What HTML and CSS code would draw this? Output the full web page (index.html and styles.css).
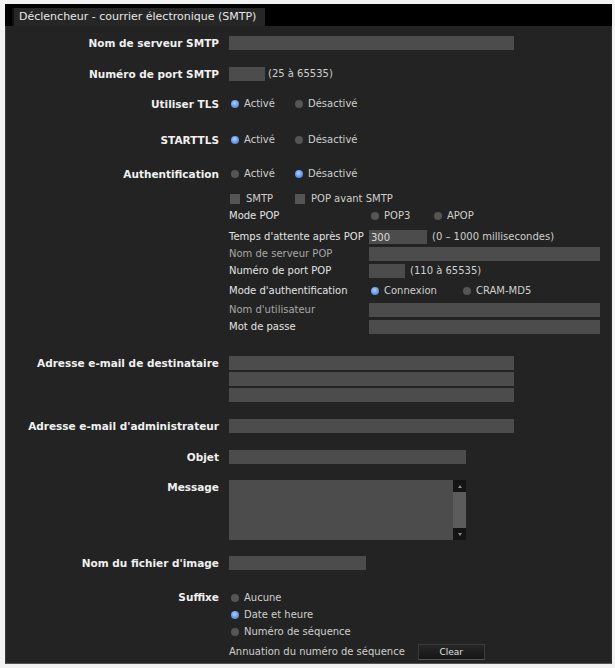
FILE: index.html
```html
<!DOCTYPE html>
<html lang="fr">
<head>
<meta charset="utf-8">
<title>Déclencheur - courrier électronique (SMTP)</title>
<link rel="stylesheet" href="styles.css">
</head>
<body>
<div class="page">
  <div class="tabbar"><div class="tab">Déclencheur - courrier électronique (SMTP)</div></div>
  <div class="panel">
    <div class="row g-first">
      <div class="lbl">Nom de serveur SMTP</div>
      <div class="fld"><input class="box w285" type="text"></div>
    </div>
    <div class="row g17">
      <div class="lbl">Numéro de port SMTP</div>
      <div class="fld"><input class="box w36" type="text"><span class="hint">(25 à 65535)</span></div>
    </div>
    <div class="row g16">
      <div class="lbl">Utiliser TLS</div>
      <div class="fld">
        <span class="opt o64"><span class="radio on"></span>Activé</span>
        <span class="opt"><span class="radio"></span>Désactivé</span>
      </div>
    </div>
    <div class="row g22">
      <div class="lbl">STARTTLS</div>
      <div class="fld">
        <span class="opt o64"><span class="radio on"></span>Activé</span>
        <span class="opt"><span class="radio"></span>Désactivé</span>
      </div>
    </div>
    <div class="row g20">
      <div class="lbl">Authentification</div>
      <div class="fld">
        <span class="opt o64"><span class="radio"></span>Activé</span>
        <span class="opt"><span class="radio on"></span>Désactivé</span>
      </div>
    </div>
    <div class="row g11">
      <div class="lbl"></div>
      <div class="fld">
        <span class="opt o66"><span class="check"></span>SMTP</span>
        <span class="opt"><span class="check"></span>POP avant SMTP</span>
      </div>
    </div>
    <div class="row g3">
      <div class="lbl"></div>
      <div class="sub">
        <div class="slbl">Mode POP</div>
        <div class="sfld">
          <span class="opt o63"><span class="radio"></span>POP3</span>
          <span class="opt"><span class="radio"></span>APOP</span>
        </div>
        <div class="slbl">Temps d'attente après POP</div>
        <div class="sfld"><input class="box w58" type="text" value="300"><span class="hint h5">(0 – 1000 millisecondes)</span></div>
        <div class="slbl dim">Nom de serveur POP</div>
        <div class="sfld"><input class="box w231" type="text"></div>
        <div class="slbl">Numéro de port POP</div>
        <div class="sfld"><input class="box w36" type="text"><span class="hint h5">(110 à 65535)</span></div>
        <div class="slbl">Mode d'authentification</div>
        <div class="sfld">
          <span class="opt o92"><span class="radio on"></span>Connexion</span>
          <span class="opt"><span class="radio"></span>CRAM-MD5</span>
        </div>
        <div class="slbl dim">Nom d'utilisateur</div>
        <div class="sfld"><input class="box w231" type="text"></div>
        <div class="slbl">Mot de passe</div>
        <div class="sfld"><input class="box w231" type="password"></div>
      </div>
    </div>
    <div class="row g21">
      <div class="lbl">Adresse e-mail de destinataire</div>
      <div class="fld stack">
        <input class="box w285" type="text">
        <input class="box w285" type="text">
        <input class="box w285" type="text">
      </div>
    </div>
    <div class="row g17">
      <div class="lbl">Adresse e-mail d'administrateur</div>
      <div class="fld"><input class="box w285" type="text"></div>
    </div>
    <div class="row g17">
      <div class="lbl">Objet</div>
      <div class="fld"><input class="box w237" type="text"></div>
    </div>
    <div class="row g16">
      <div class="lbl">Message</div>
      <div class="fld">
        <div class="textarea">
          <div class="ta-body"></div>
          <div class="ta-bar">
            <span class="ta-btn"><span class="arr up"></span></span>
            <span class="ta-btn"><span class="arr down"></span></span>
          </div>
        </div>
      </div>
    </div>
    <div class="row g16">
      <div class="lbl">Nom du fichier d'image</div>
      <div class="fld"><input class="box w137" type="text"></div>
    </div>
    <div class="row g20">
      <div class="lbl">Suffixe</div>
      <div class="fld vstack">
        <span class="opt"><span class="radio"></span>Aucune</span>
        <span class="opt"><span class="radio on"></span>Date et heure</span>
        <span class="opt"><span class="radio"></span>Numéro de séquence</span>
      </div>
    </div>
    <div class="row g4">
      <div class="lbl"></div>
      <div class="fld"><span class="plain">Annuation du numéro de séquence</span><button class="btn" type="button">Clear</button></div>
    </div>
  </div>
</div>
</body>
</html>
```
FILE: styles.css
```css
html, body {
  margin: 0;
  padding: 0;
  background: #f2f2f2;
}
body {
  font-family: "DejaVu Sans", Verdana, sans-serif;
  font-size: 10px;
  color: #cfcfcf;
}
.page {
  margin: 4px 3px 0 5px;
  width: 607px;
}
.tabbar {
  background: #000;
  height: 22px;
  display: flex;
  align-items: flex-end;
  padding-left: 7px;
}
.tab {
  background: #262626;
  color: #e6e6e6;
  height: 18px;
  line-height: 18px;
  padding: 0 0 0 5px;
  width: 246px;
  border-left: 2px solid #111;
  font-size: 11px;
  white-space: nowrap;
  overflow: hidden;
}
.panel {
  background: #232323;
  height: 638px;
  padding-top: 10px;
  box-sizing: border-box;
  border-left: 1px solid #3a3a3a;
  border-bottom: 1px solid #555;
  border-right: 1px solid #2e2e2e;
}
.row {
  display: grid;
  grid-template-columns: 213px 1fr;
  column-gap: 10px;
  align-items: start;
}
.g3 { margin-top: 3px; }
.g4 { margin-top: 4px; }
.g11 { margin-top: 11px; }
.g16 { margin-top: 16px; }
.g17 { margin-top: 17px; }
.g20 { margin-top: 20px; }
.g21 { margin-top: 21px; }
.g22 { margin-top: 22px; }
.lbl {
  text-align: right;
  font-weight: bold;
  color: #f0f0f0;
  font-size: 10.5px;
  line-height: 14px;
  white-space: nowrap;
}
.fld {
  display: flex;
  align-items: center;
  min-height: 14px;
  line-height: 14px;
}
.box {
  display: block;
  box-sizing: border-box;
  height: 14px;
  margin: 0;
  padding: 0 2px;
  border: none;
  background: #4c4c4c;
  color: #dcdcdc;
  font-family: "DejaVu Sans", Verdana, sans-serif;
  font-size: 10px;
  outline: none;
}
.w285 { width: 285px; }
.w237 { width: 237px; }
.w231 { width: 231px; }
.w137 { width: 137px; }
.w58 { width: 58px; }
.w36 { width: 36px; }
.hint { margin-left: 3px; white-space: nowrap; }
.h5 { margin-left: 5px; }
.opt {
  display: inline-flex;
  align-items: center;
  white-space: nowrap;
  height: 14px;
}
.o64 { width: 64px; }
.o66 { width: 65px; }
.o63 { width: 63px; }
.o92 { width: 92px; }
.radio {
  display: inline-block;
  width: 8px;
  height: 8px;
  border-radius: 50%;
  background: #555;
  margin: 0 5px 0 2px;
  flex: none;
}
.radio.on {
  background: radial-gradient(circle at 45% 40%, #b8d2ff 0, #6f9ff0 45%, #3c6fc8 100%);
}
.check {
  display: inline-block;
  width: 10px;
  height: 10px;
  background: #555;
  margin: 0 6px 0 1px;
  flex: none;
}
.sub {
  display: grid;
  grid-template-columns: 140px 1fr;
  grid-template-rows: 21px 17px 17px 20px 19px 17px 15px;
  align-items: start;
}
.slbl {
  color: #e4e4e4;
  line-height: 14px;
  white-space: nowrap;
}
.slbl.dim { color: #a8a8a8; }
.sfld {
  display: flex;
  align-items: center;
  height: 14px;
  line-height: 14px;
}
.stack {
  flex-direction: column;
  align-items: flex-start;
  gap: 2px;
}
.vstack {
  flex-direction: column;
  align-items: flex-start;
  gap: 1px;
}
.vstack .opt { height: 16px; }
.textarea {
  display: flex;
  width: 237px;
  height: 60px;
  background: #4c4c4c;
}
.ta-body { flex: 1; }
.ta-bar {
  width: 13px;
  background: #5c5c5c;
  display: flex;
  flex-direction: column;
  justify-content: space-between;
}
.ta-btn {
  display: flex;
  align-items: center;
  justify-content: center;
  width: 13px;
  height: 12px;
  background: #141414;
}
.arr {
  width: 0;
  height: 0;
  border-left: 2px solid transparent;
  border-right: 2px solid transparent;
}
.arr.up { border-bottom: 3px solid #8a8a8a; }
.arr.down { border-top: 3px solid #8a8a8a; }
.plain {
  color: #cfcfcf;
  white-space: nowrap;
}
.btn {
  margin-left: 13px;
  width: 67px;
  height: 16px;
  padding: 0;
  background: linear-gradient(#262626, #161616);
  border: 1px solid #3a3a3a;
  border-bottom-color: #555;
  color: #e0e0e0;
  font-family: "DejaVu Sans", Verdana, sans-serif;
  font-size: 9px;
  line-height: 14px;
}
```
